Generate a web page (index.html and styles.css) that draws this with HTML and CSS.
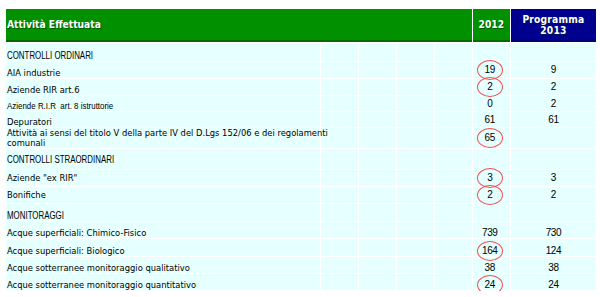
FILE: index.html
```html
<!DOCTYPE html>
<html lang="it">
<head>
<meta charset="utf-8">
<title>Attività Effettuata</title>
<link rel="stylesheet" href="styles.css">
</head>
<body>
<div class="wrap">
<table class="grid">
<colgroup>
<col class="c-label"><col class="c-e"><col class="c-e"><col class="c-e"><col class="c-e"><col class="c-y"><col class="c-p">
</colgroup>
<thead>
<tr class="head">
<th class="h-green h-left" colspan="5">Attività Effettuata</th>
<th class="h-green h-num">2012</th>
<th class="h-blue">Programma<br>2013</th>
</tr>
</thead>
<tbody>
<tr class="r18"><td class="lab lo"><span class="sq">CONTROLLI ORDINARI</span></td><td></td><td></td><td></td><td></td><td class="y"></td><td></td></tr>
<tr class="r16"><td class="lab lo v">AIA industrie</td><td></td><td></td><td></td><td></td><td class="n y"><span class="num">19<span class="ring"></span></span></td><td class="n">9</td></tr>
<tr class="r16"><td class="lab lo v">Aziende RIR art.6</td><td></td><td></td><td></td><td></td><td class="n y"><span class="num">2<span class="ring"></span></span></td><td class="n">2</td></tr>
<tr class="r15"><td class="lab lo"><span class="sq sq-small">Aziende R.I.R&nbsp; art. 8 istruttorie</span></td><td></td><td></td><td></td><td></td><td class="n y">0</td><td class="n">2</td></tr>
<tr class="r15"><td class="lab lo v">Depuratori</td><td></td><td></td><td></td><td></td><td class="n y">61</td><td class="n">61</td></tr>
<tr class="r20"><td class="lab lo v"><span class="nowrap">Attività ai sensi del titolo V della parte IV del D.Lgs 152/06 e dei regolamenti</span><br>comunali</td><td></td><td></td><td></td><td></td><td class="n y"><span class="num">65<span class="ring"></span></span></td><td class="n"></td></tr>
<tr class="r20"><td class="lab"><span class="sq">CONTROLLI STRAORDINARI</span></td><td></td><td></td><td></td><td></td><td class="y"></td><td></td></tr>
<tr class="r16"><td class="lab v">Aziende "ex RIR"</td><td></td><td></td><td></td><td></td><td class="n y"><span class="num">3<span class="ring"></span></span></td><td class="n">3</td></tr>
<tr class="r16"><td class="lab v">Bonifiche</td><td></td><td></td><td></td><td></td><td class="n y"><span class="num">2<span class="ring"></span></span></td><td class="n">2</td></tr>
<tr class="r17 low"><td class="lab"><span class="sq">MONITORAGGI</span></td><td></td><td></td><td></td><td></td><td class="y"></td><td></td></tr>
<tr class="r16 low"><td class="lab v">Acque superficiali: Chimico-Fisico</td><td></td><td></td><td></td><td></td><td class="n y">739</td><td class="n">730</td></tr>
<tr class="r17 low"><td class="lab v">Acque superficiali: Biologico</td><td></td><td></td><td></td><td></td><td class="n y"><span class="num">164<span class="ring"></span></span></td><td class="n">124</td></tr>
<tr class="r16 low"><td class="lab v">Acque sotterranee monitoraggio qualitativo</td><td></td><td></td><td></td><td></td><td class="n y">38</td><td class="n">38</td></tr>
<tr class="r16 low"><td class="lab v">Acque sotterranee monitoraggio quantitativo</td><td></td><td></td><td></td><td></td><td class="n y"><span class="num">24<span class="ring"></span></span></td><td class="n">24</td></tr>
</tbody>
</table>
</div>
</body>
</html>
```
FILE: styles.css
```css
html, body {
  margin: 0;
  padding: 0;
  background: #ffffff;
}

.wrap {
  padding: 8px 0 0 5px;
}

.grid {
  table-layout: fixed;
  border-collapse: separate;
  border-spacing: 1px;
  background: #ffffff;
  width: 592px;
}

.c-label { width: 313px; }
.c-e { width: 37px; }
.c-y { width: 37px; }
.c-p { width: 85px; }

.grid th,
.grid td {
  padding: 0;
  background: #e6ffff;
  color: #000000;
  vertical-align: middle;
}

.head th {
  height: 31px;
  color: #ffffff;
  font-family: "DejaVu Sans Condensed", "DejaVu Sans", sans-serif;
  font-stretch: condensed;
  font-weight: bold;
  font-size: 10.2px;
  line-height: 11px;
  text-shadow: 1px 1px 0 rgba(0, 40, 0, 0.55);
}

.grid .h-green {
  background: #009000;
  border-bottom: 2px solid #006a00;
}

.grid .h-left {
  text-align: left;
  padding-left: 1px;
}

.h-num {
  text-align: center;
}

.grid .h-blue {
  background: #00008f;
  text-align: center;
  letter-spacing: 0.2px;
  border-bottom: 2px solid #00007a;
}

.r15 td { height: 15px; }
.r16 td { height: 16px; }
.r17 td { height: 17px; }
.r18 td { height: 18px; }
.r20 td { height: 20px; }

.grid .lab {
  padding-left: 1px;
  text-align: left;
  line-height: 10px;
}

.grid .lo,
.grid .low td {
  vertical-align: bottom;
}

.v {
  font-family: "DejaVu Sans Condensed", "DejaVu Sans", sans-serif;
  font-stretch: condensed;
  font-size: 9.3px;
}

.nowrap {
  white-space: nowrap;
}

.sq {
  display: inline-block;
  white-space: nowrap;
  font-family: "Liberation Sans", Arial, sans-serif;
  font-size: 10px;
  line-height: 10px;
  transform: scaleX(0.79);
  transform-origin: left center;
}

.sq-small {
  font-size: 9.8px;
  transform: scaleX(0.81);
}

.n {
  font-family: "Liberation Sans", Arial, sans-serif;
  font-size: 10px;
  line-height: 10px;
  letter-spacing: -0.4px;
  text-align: center;
}

.grid .y {
  padding-right: 3px;
}

.num {
  position: relative;
  display: inline-block;
}

.ring {
  position: absolute;
  left: 50%;
  top: 50%;
  box-sizing: border-box;
  width: 26px;
  height: 20px;
  margin-left: -13px;
  margin-top: -10.5px;
  border: 1.2px solid #f25050;
  border-radius: 50%;
}
```
